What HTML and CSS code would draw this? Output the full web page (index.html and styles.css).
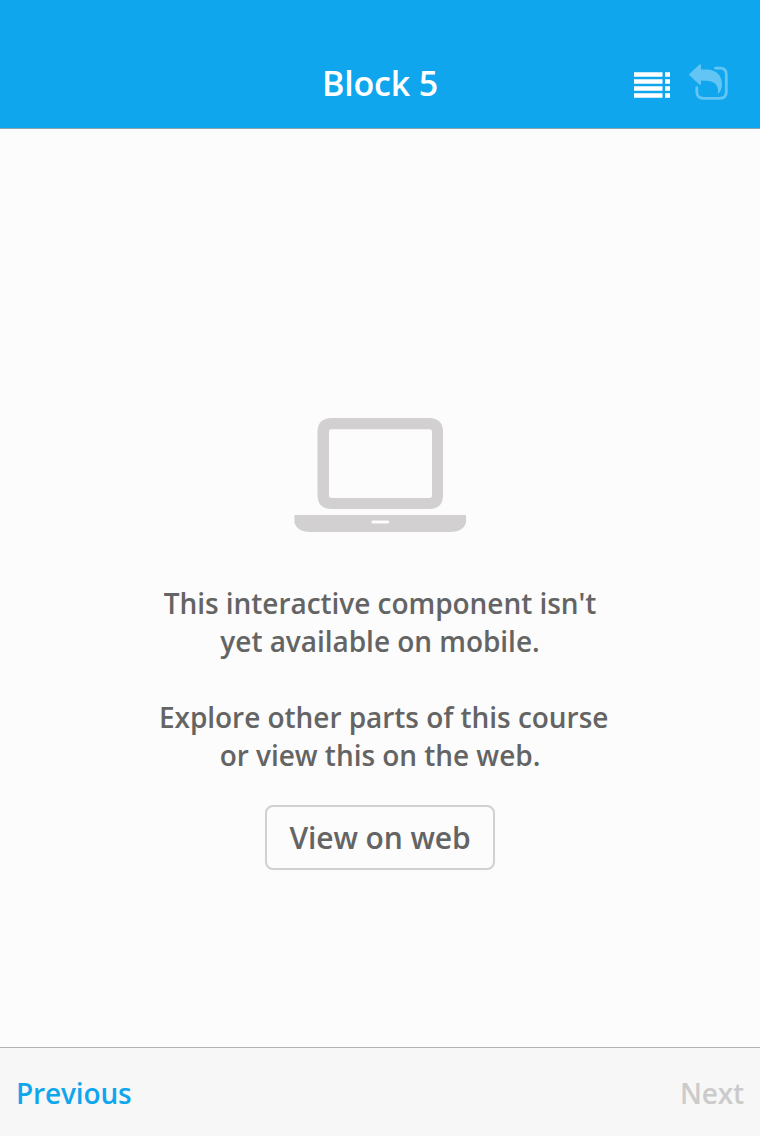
FILE: index.html
```html
<!DOCTYPE html>
<html lang="en">
<head>
<meta charset="utf-8">
<title>Block 5</title>
<link rel="stylesheet" href="styles.css">
</head>
<body>
<div class="screen">
  <header class="navbar">
    <h1 class="title">Block 5</h1>
    <div class="actions">
      <svg class="icon-list" viewBox="0 0 36 26" width="36" height="26"><path d="M0 .3h28.500v4.500H0zM31 .3h5v4.500h-5zM0 7.200h28.500v4.500H0zM31 7.200h5v4.500h-5zM0 14.200h28.500v4.500H0zM31 14.200h5v4.500h-5zM0 21.200h28.500v4.500H0zM31 21.200h5v4.500h-5z"/></svg>
      <svg class="icon-open" viewBox="0 0 40 38" width="40" height="38"><path class="arrow" d="M.4 11.200Q-.3 10.600.4 10L10 .9q1.700-1.500 2 .6v4h5C28 5.500 33 12 33 20.500Q33 26 28.900 30.300C30 20 26 16.500 12 16.500v3q-.3 2.200-2 .7z"/><path class="frame" d="M26.500 4.200h4.500q6.300 0 6.300 6.300v17.200q0 6.600-6.600 6.600H14.500q-6.700 0-6.700-6.600v-4"/></svg>
    </div>
  </header>
  <main class="content">
    <svg class="laptop" viewBox="0 0 172 115" width="172" height="115"><path fill-rule="evenodd" d="M38 0h97q14 0 14 14v63q0 14-14 14H38q-14.500 0-14.500-14V14Q23.500 0 38 0zM37.500 11.300q-2.500 0-2.500 2.500v63.700q0 2.500 2.500 2.500h98q2.500 0 2.500-2.500V13.800q0-2.500-2.500-2.500zM.5 97H172v8q-3 9-16 9H16.500q-13 0-16-9z"/><rect class="notch" x="77.500" y="102.500" width="17.500" height="3" rx="1.300"/></svg>
    <p class="message">This interactive component isn't<br>yet available on mobile.</p>
    <p class="message second">&nbsp;Explore other parts of this course<br>or view this on the web.</p>
    <button class="web-button">View on web</button>
  </main>
  <footer class="toolbar"><span class="previous">Previous</span><span class="next">Next</span></footer>
</div>
</body>
</html>
```
FILE: styles.css
```css
* { box-sizing: border-box; }
body { margin: 0; font-family: "Open Sans", sans-serif; font-weight: 600; }
.screen { width: 760px; height: 1136px; display: flex; flex-direction: column; background: #fcfcfc; }
.navbar { height: 129px; padding-top: 38px; background: #10a6ee; border-bottom: 1px solid #8ea4af; display: grid; grid-template-columns: 1fr auto 1fr; align-items: center; color: #fff; }
.title { grid-column: 2; margin: 0; font-size: 34px; line-height: 46px; font-weight: 600; letter-spacing: -.15px; }
.actions { display: flex; justify-content: flex-end; align-items: flex-start; gap: 19px; padding-right: 31px; }
.icon-list { fill: #fff; margin-top: 8px; }
.arrow { fill: #63c5f4; }
.frame { fill: none; stroke: #63c5f4; stroke-width: 2.8; stroke-linecap: round; }
.content { flex: 1; display: flex; flex-direction: column; align-items: center; padding-top: 289px; }
.laptop { fill: #d2d0d1; display: block; }
.notch { fill: #fcfcfc; }
.message { margin: 51px 0 0; font-size: 28px; line-height: 38px; color: #646464; text-align: center; white-space: nowrap; letter-spacing: -.04px; }
.second { margin-top: 38px; }
.web-button { width: 230px; height: 65px; margin-top: 31px; padding: 0; border: 2px solid #d2d0d1; border-radius: 8px; background: #fcfcfc; color: #646464; font: 600 30px/40px "Open Sans", sans-serif; letter-spacing: -.1px; }
.toolbar { height: 89px; border-top: 1px solid #b2b2b2; background: #f7f7f7; padding: 2px 16px 0; display: flex; justify-content: space-between; align-items: center; font-size: 28px; letter-spacing: -.15px; }
.previous { color: #10a6ee; }
.next { color: #cbcbcb; }
```
